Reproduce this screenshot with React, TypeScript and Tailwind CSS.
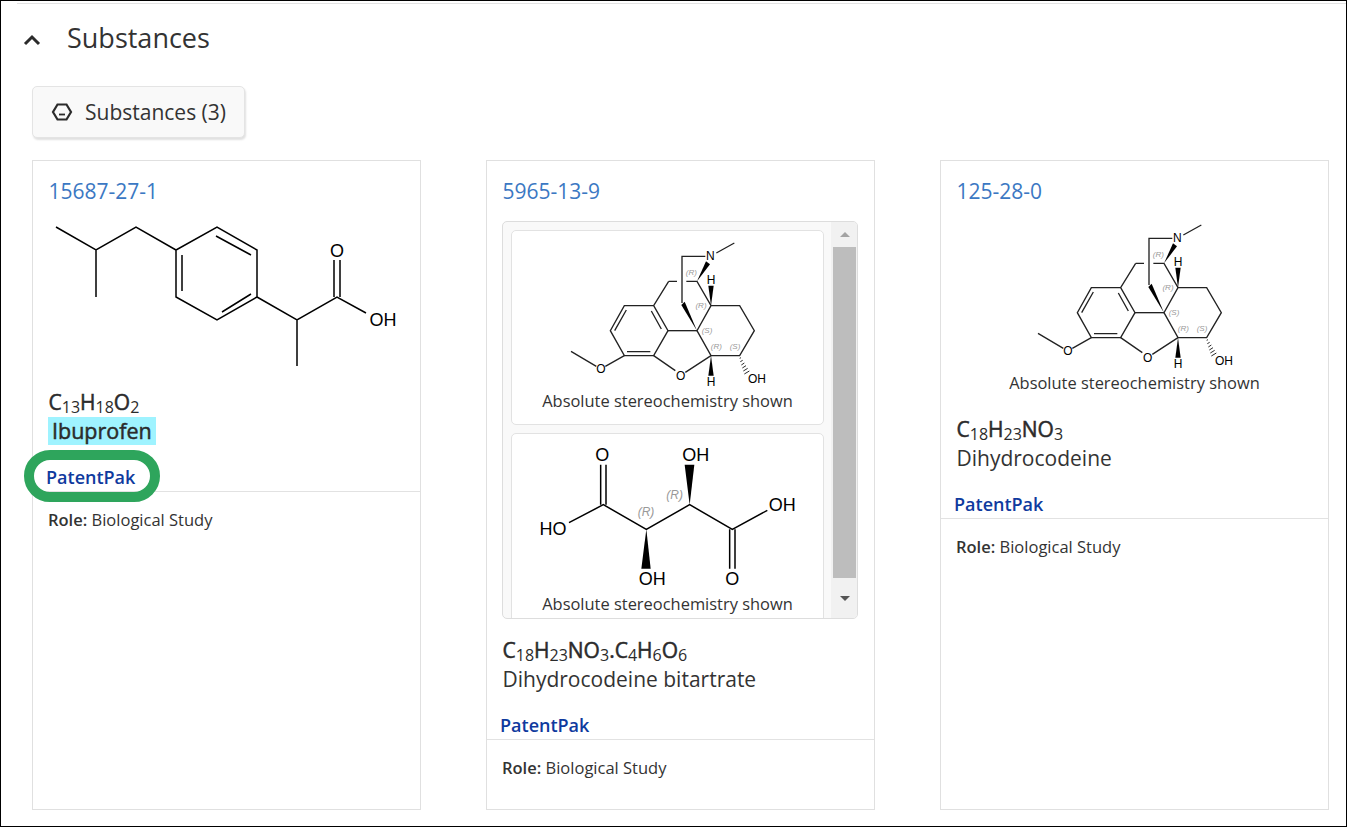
import type { ReactNode } from 'react';

const molText = { fontFamily: '"Liberation Sans", sans-serif' };

function Atom({ x, y, size, children }: { x: number; y: number; size: number; children: ReactNode }) {
  return (
    <text x={x} y={y} fontSize={size} textAnchor="middle" dominantBaseline="central" fill="#000" style={molText}>
      {children}
    </text>
  );
}

function Stereo({ x, y, size, children }: { x: number; y: number; size: number; children: ReactNode }) {
  return (
    <text x={x} y={y} fontSize={size} fontStyle="italic" textAnchor="middle" dominantBaseline="central" fill="#999" style={molText}>
      {children}
    </text>
  );
}

// coordinates are page pixels minus the svg origin (48, 215)
function IbuprofenMol() {
  return (
    <svg width="356" height="160" viewBox="48 215 356 160" className="block">
      <g fill="none" stroke="#000" strokeWidth="1.5">
        <path d="M56 227L96 250L136 227L176 250M96 250V297" />
        <path d="M176 250V297L217 320L257 297V250L217 227Z" />
        <path d="M182 255V291M216 236L251 255M222 312L251 294" />
        <path d="M257 297L297 320L337 297L366 313M297 320V366" />
        <path d="M334 297V260M340 297V260" />
      </g>
      <Atom x={337} y={251} size={18}>O</Atom>
      <Atom x={383} y={320} size={18}>OH</Atom>
    </svg>
  );
}

// drawn in 3x units, shown at a third of that
function DihydrocodeineMol() {
  return (
    <svg width="200" height="152" viewBox="200 70 600 456" className="block">
      <g fill="none" stroke="#222" strokeWidth="4">
        <path d="M702 82L648 112M615 122H545V262" />
        <path d="M505 197H530M558 197H590L632 270H718L762 345L718 420H632L590 345L632 270" />
        <path d="M590 345H503" />
        <path d="M460 270L503 345L460 420H372L330 345L372 270H460L505 197" />
        <path d="M453 286L483 340M450 408H380M343 345L378 283" />
        <path d="M460 420L525 465M555 470L632 420" />
        <path d="M372 420L315 452M288 452L212 407" />
      </g>
      <g fill="#000">
        <polygon points="590,197 617,137 629,146" />
        <polygon points="632,270 624,210 640,210" />
        <polygon points="590,345 543,268 553,258" />
        <polygon points="632,420 624,480 640,480" />
      </g>
      <path d="M722 426l-4 2M727 434l-7 4M732 442l-9 6M737 450l-11 7M742 458l-13 8M747 466l-15 9" stroke="#000" strokeWidth="2.5" fill="none" />
      <Atom x={630} y={122} size={36}>N</Atom>
      <Atom x={632} y={192} size={36}>H</Atom>
      <Atom x={632} y={500} size={36}>H</Atom>
      <Atom x={302} y={460} size={36}>O</Atom>
      <Atom x={541} y={480} size={36}>O</Atom>
      <Atom x={770} y={490} size={36}>OH</Atom>
      <Stereo x={573} y={170} size={24}>(R)</Stereo>
      <Stereo x={602} y={270} size={24}>(R)</Stereo>
      <Stereo x={620} y={344} size={24}>(S)</Stereo>
      <Stereo x={648} y={393} size={24}>(R)</Stereo>
      <Stereo x={704} y={393} size={24}>(S)</Stereo>
    </svg>
  );
}

function TartrateMol() {
  return (
    <svg width="280" height="151" viewBox="100 50 840 453" className="block">
      <g fill="none" stroke="#000" strokeWidth="4.5">
        <path d="M205 292L308 238L437 312L567 238L695 312L800 255" />
        <path d="M300 238V118M316 238V118" />
        <path d="M687 312V430M703 312V430" />
      </g>
      <g fill="#000">
        <polygon points="437,312 422,430 450,430" />
        <polygon points="567,238 552,118 581,118" />
      </g>
      <Atom x={305} y={88} size={54}>O</Atom>
      <Atom x={157} y={312} size={54}>HO</Atom>
      <Atom x={455} y={462} size={54}>OH</Atom>
      <Atom x={585} y={88} size={54}>OH</Atom>
      <Atom x={695} y={462} size={54}>O</Atom>
      <Atom x={845} y={238} size={54}>OH</Atom>
      <Stereo x={436} y={260} size={36}>(R)</Stereo>
      <Stereo x={522} y={208} size={36}>(R)</Stereo>
    </svg>
  );
}

function ScrollBox() {
  return (
    <div className="flex h-[398px] w-[356px] overflow-hidden rounded-[5px] border border-[#dddddd] bg-[#f9f9f9]">
      <div className="flex w-[328px] shrink-0 flex-col gap-2 overflow-hidden pl-2 pt-2">
        <div className="flex h-[195px] w-[313px] shrink-0 flex-col items-center rounded-[5px] border border-[#e2e2e2] bg-white">
          <div className="ml-[-2px] mt-[8px]">
            <DihydrocodeineMol />
          </div>
          <p className="mt-[-1px] text-[16.45px] leading-[22px]">Absolute stereochemistry shown</p>
        </div>
        <div className="flex h-[195px] w-[313px] shrink-0 flex-col items-center rounded-[5px] border border-[#e2e2e2] bg-white">
          <div className="ml-[13px] mt-[8px]">
            <TartrateMol />
          </div>
          <p className="text-[16.45px] leading-[22px]">Absolute stereochemistry shown</p>
        </div>
      </div>
      <div className="flex flex-1 flex-col items-center bg-[#f1f1f1] pl-[2px] pr-[1px]">
        <div className="flex h-[25px] w-full items-center justify-center">
          <div className="h-0 w-0 border-x-[5px] border-b-[5px] border-x-transparent border-b-[#a3a3a3]" />
        </div>
        <div className="h-[331px] w-full bg-[#bdbdbd]" />
        <div className="flex h-[40px] w-full items-center justify-center">
          <div className="h-0 w-0 border-x-[5px] border-t-[5px] border-x-transparent border-t-[#555555]" />
        </div>
      </div>
    </div>
  );
}

function Formula({ parts }: { parts: [string, string?][] }) {
  return (
    <p className="h-[29px] text-[21px] leading-7 text-[#2b2b2b] [-webkit-text-stroke:0.5px_#2b2b2b]">
      {parts.map(([el, n], i) => (
        <span key={i}>
          {el}
          {n && <span className="relative top-[3px] text-[16px] leading-none [-webkit-text-stroke:0px]">{n}</span>}
        </span>
      ))}
    </p>
  );
}

type CardProps = {
  cas: string;
  formula: [string, string?][];
  name: string;
  highlight?: boolean;
  ring?: boolean;
  children: ReactNode;
};

function SubstanceCard({ cas, formula, name, highlight, ring, children }: CardProps) {
  return (
    <div className="relative flex h-[650px] w-[389px] flex-col border border-[#e0e0e0]">
      <a className="mt-[16px] h-7 pl-[15.5px] text-[21px] leading-7 text-[#3b78c3]">{cas}</a>
      {children}
      <div className="pl-[15.5px]">
        <Formula parts={formula} />
        {highlight ? (
          <p className="h-7 text-[21.5px] leading-7 [-webkit-text-stroke:0.5px_#2b2b2b]">
            <span className="ml-[-0.5px] inline-block bg-[#9ff3ff] px-[4px] text-[#2b2b2b]">{name}</span>
          </p>
        ) : (
          <p className="h-7 text-[21px] leading-7">{name}</p>
        )}
      </div>
      <div className="mt-[18px] h-7 pl-[13px] text-[18px] font-semibold leading-7 text-[#0f3a9e]">PatentPak</div>
      <div className="border-t border-[#e2e2e2] pl-[15px] pt-[16px] text-[16.5px] leading-6">
        <span className="font-semibold">Role:</span> Biological Study
      </div>
      {ring && (
        <div className="absolute left-[-9px] top-[289px] h-[52px] w-[136px] rounded-full border-[10px] border-[#2ea55c]" />
      )}
    </div>
  );
}

export default function App() {
  return (
    <div className="h-[827px] w-[1347px] overflow-hidden border border-black bg-white font-['Open_Sans',sans-serif] text-[#333333]">
      <div className="ml-4 mt-[2px] border-t border-[#e2e2e2]" />
      <div className="flex h-[67px] items-center">
        <svg width="20" height="20" viewBox="0 0 20 20" className="ml-[21px] mt-[5px]" fill="none" stroke="#2b2b2b" strokeWidth="3">
          <path d="M3 14L10 7L17 14" />
        </svg>
        <h2 className="ml-[25px] text-[27px] font-normal leading-9">Substances</h2>
      </div>
      <div className="pl-[31px]">
        <button className="mt-[15px] flex h-[52px] w-[213px] items-center rounded-[5px] border border-[#e4e4e4] bg-[#f9f9f9] pl-[18px] text-[21px] shadow-[1px_2px_2px_rgba(0,0,0,0.12)]">
          <svg width="22" height="22" viewBox="0 0 22 22" fill="none" stroke="#2b2b2b" strokeWidth="2.2">
            <path d="M6.5 3.5H15.5L20 11L15.5 18.5H6.5L2 11Z" />
            <path d="M8 13.5H14" strokeWidth="1.8" />
          </svg>
          <span className="ml-[12px] pt-[2px]">Substances (3)</span>
        </button>
        <div className="mt-[22px] flex gap-[65px]">
          <SubstanceCard cas="15687-27-1" formula={[['C', '13'], ['H', '18'], ['O', '2']]} name="Ibuprofen" highlight ring>
            <div className="h-[183px] pl-[15px] pt-[10px]">
              <IbuprofenMol />
            </div>
          </SubstanceCard>
          <SubstanceCard cas="5965-13-9" formula={[['C', '18'], ['H', '23'], ['NO', '3'], ['.C', '4'], ['H', '6'], ['O', '6']]} name="Dihydrocodeine bitartrate">
            <div className="h-[431px] pl-[15px] pt-[16px]">
              <ScrollBox />
            </div>
          </SubstanceCard>
          <SubstanceCard cas="125-28-0" formula={[['C', '18'], ['H', '23'], ['NO', '3']]} name="Dihydrocodeine">
            <div className="flex h-[210px] flex-col items-center pt-[16px]">
              <div className="ml-[-2px]">
                <DihydrocodeineMol />
              </div>
              <p className="mt-[-1px] text-[16.45px] leading-[22px]">Absolute stereochemistry shown</p>
            </div>
          </SubstanceCard>
        </div>
      </div>
    </div>
  );
}
